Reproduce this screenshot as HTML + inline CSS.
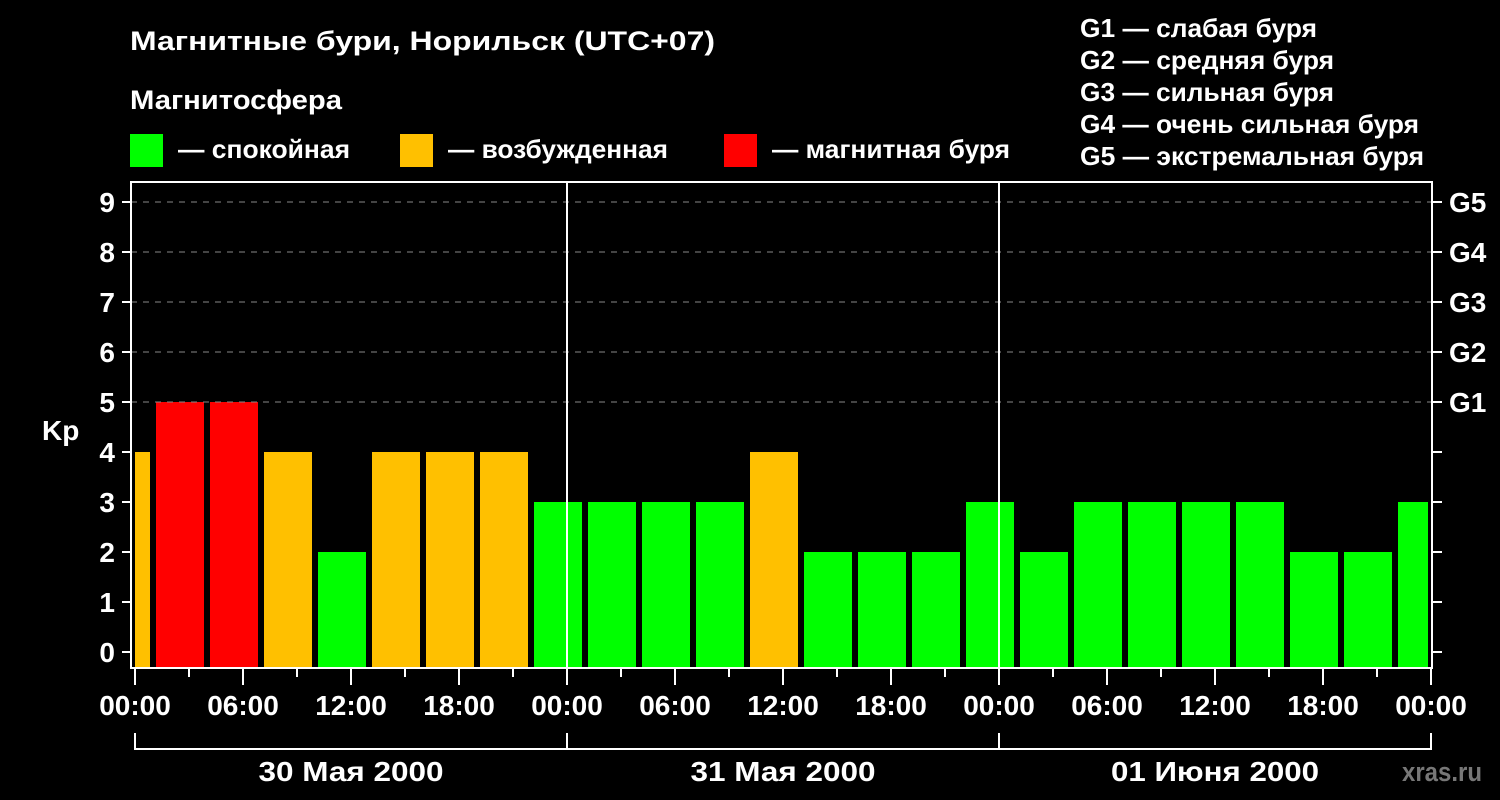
<!DOCTYPE html>
<html><head><meta charset="utf-8"><style>
body{margin:0;background:#000;width:1500px;height:800px;overflow:hidden}
svg{display:block}
text{font-family:"Liberation Sans",sans-serif;font-weight:bold;fill:#fff}
</style></head><body>
<svg width="1500" height="800" xmlns="http://www.w3.org/2000/svg">
<rect width="1500" height="800" fill="#000"/>
<text x="130" y="50" font-size="27" textLength="585" lengthAdjust="spacingAndGlyphs">Магнитные бури, Норильск (UTC+07)</text>
<text x="130" y="109" font-size="27" textLength="212" lengthAdjust="spacingAndGlyphs">Магнитосфера</text>
<rect x="130" y="134" width="33" height="33" fill="#00ff00"/>
<text x="178" y="158" font-size="26" textLength="172" lengthAdjust="spacingAndGlyphs">— спокойная</text>
<rect x="400" y="134" width="33" height="33" fill="#ffc000"/>
<text x="448" y="158" font-size="26" textLength="220" lengthAdjust="spacingAndGlyphs">— возбужденная</text>
<rect x="724" y="134" width="33" height="33" fill="#ff0000"/>
<text x="772" y="158" font-size="26" textLength="238" lengthAdjust="spacingAndGlyphs">— магнитная буря</text>
<g font-size="26">
<text x="1080" y="37" textLength="237" lengthAdjust="spacingAndGlyphs">G1 — слабая буря</text>
<text x="1080" y="69" textLength="254" lengthAdjust="spacingAndGlyphs">G2 — средняя буря</text>
<text x="1080" y="101" textLength="254" lengthAdjust="spacingAndGlyphs">G3 — сильная буря</text>
<text x="1080" y="133" textLength="339" lengthAdjust="spacingAndGlyphs">G4 — очень сильная буря</text>
<text x="1080" y="165" textLength="344" lengthAdjust="spacingAndGlyphs">G5 — экстремальная буря</text>
</g>
<g>
<rect x="135" y="452" width="15" height="216" fill="#ffc000"/>
<rect x="156" y="402" width="48" height="266" fill="#ff0000"/>
<rect x="210" y="402" width="48" height="266" fill="#ff0000"/>
<rect x="264" y="452" width="48" height="216" fill="#ffc000"/>
<rect x="318" y="552" width="48" height="116" fill="#00ff00"/>
<rect x="372" y="452" width="48" height="216" fill="#ffc000"/>
<rect x="426" y="452" width="48" height="216" fill="#ffc000"/>
<rect x="480" y="452" width="48" height="216" fill="#ffc000"/>
<rect x="534" y="502" width="48" height="166" fill="#00ff00"/>
<rect x="588" y="502" width="48" height="166" fill="#00ff00"/>
<rect x="642" y="502" width="48" height="166" fill="#00ff00"/>
<rect x="696" y="502" width="48" height="166" fill="#00ff00"/>
<rect x="750" y="452" width="48" height="216" fill="#ffc000"/>
<rect x="804" y="552" width="48" height="116" fill="#00ff00"/>
<rect x="858" y="552" width="48" height="116" fill="#00ff00"/>
<rect x="912" y="552" width="48" height="116" fill="#00ff00"/>
<rect x="966" y="502" width="48" height="166" fill="#00ff00"/>
<rect x="1020" y="552" width="48" height="116" fill="#00ff00"/>
<rect x="1074" y="502" width="48" height="166" fill="#00ff00"/>
<rect x="1128" y="502" width="48" height="166" fill="#00ff00"/>
<rect x="1182" y="502" width="48" height="166" fill="#00ff00"/>
<rect x="1236" y="502" width="48" height="166" fill="#00ff00"/>
<rect x="1290" y="552" width="48" height="116" fill="#00ff00"/>
<rect x="1344" y="552" width="48" height="116" fill="#00ff00"/>
<rect x="1398" y="502" width="30" height="166" fill="#00ff00"/>
</g>
<g stroke="#888" stroke-dasharray="6,6" stroke-width="1">
<line x1="131" y1="202" x2="1432" y2="202"/><line x1="131" y1="252" x2="1432" y2="252"/>
<line x1="131" y1="302" x2="1432" y2="302"/><line x1="131" y1="352" x2="1432" y2="352"/>
<line x1="131" y1="402" x2="1432" y2="402"/>
</g>
<g stroke="#fff" stroke-width="2" fill="none">
<rect x="131" y="182" width="1301" height="486"/>
<line x1="567" y1="182" x2="567" y2="668"/><line x1="999" y1="182" x2="999" y2="668"/>
<path d="M122 652H131M122 602H131M122 552H131M122 502H131M122 452H131M122 402H131M122 352H131M122 302H131M122 252H131M122 202H131"/>
<path d="M1432 652H1442M1432 602H1442M1432 552H1442M1432 502H1442M1432 452H1442M1432 402H1442M1432 352H1442M1432 302H1442M1432 252H1442M1432 202H1442"/>
<path d="M135 668V685M189 668V677M243 668V685M297 668V677M351 668V685M405 668V677M459 668V685M513 668V677M567 668V685M621 668V677M675 668V685M729 668V677M783 668V685M837 668V677M891 668V685M945 668V677M999 668V685M1053 668V677M1107 668V685M1161 668V677M1215 668V685M1269 668V677M1323 668V685M1377 668V677M1431 668V685"/>
<path d="M135 749H1431M135 733V750M567 733V750M999 733V750M1431 733V750"/>
</g>
<g font-size="28" text-anchor="end">
<text x="115" y="662">0</text><text x="115" y="612">1</text><text x="115" y="562">2</text>
<text x="115" y="512">3</text><text x="115" y="462">4</text><text x="115" y="412">5</text>
<text x="115" y="362">6</text><text x="115" y="312">7</text><text x="115" y="262">8</text><text x="115" y="212">9</text>
</g>
<text x="42" y="440" font-size="28">Kp</text>
<g font-size="28">
<text x="1449" y="412">G1</text><text x="1449" y="362">G2</text><text x="1449" y="312">G3</text>
<text x="1449" y="262">G4</text><text x="1449" y="212">G5</text>
</g>
<g font-size="28" text-anchor="middle">
<text x="135" y="715">00:00</text><text x="243" y="715">06:00</text><text x="351" y="715">12:00</text><text x="459" y="715">18:00</text>
<text x="567" y="715">00:00</text><text x="675" y="715">06:00</text><text x="783" y="715">12:00</text><text x="891" y="715">18:00</text>
<text x="999" y="715">00:00</text><text x="1107" y="715">06:00</text><text x="1215" y="715">12:00</text><text x="1323" y="715">18:00</text>
<text x="1431" y="715">00:00</text>
<text x="351" y="781" textLength="185" lengthAdjust="spacingAndGlyphs">30 Мая 2000</text>
<text x="783" y="781" textLength="185" lengthAdjust="spacingAndGlyphs">31 Мая 2000</text>
<text x="1215" y="781" textLength="208" lengthAdjust="spacingAndGlyphs">01 Июня 2000</text>
</g>
<text x="1402" y="781" font-size="27" style="fill:#777" textLength="80" lengthAdjust="spacingAndGlyphs">xras.ru</text>
</svg>
</body></html>
